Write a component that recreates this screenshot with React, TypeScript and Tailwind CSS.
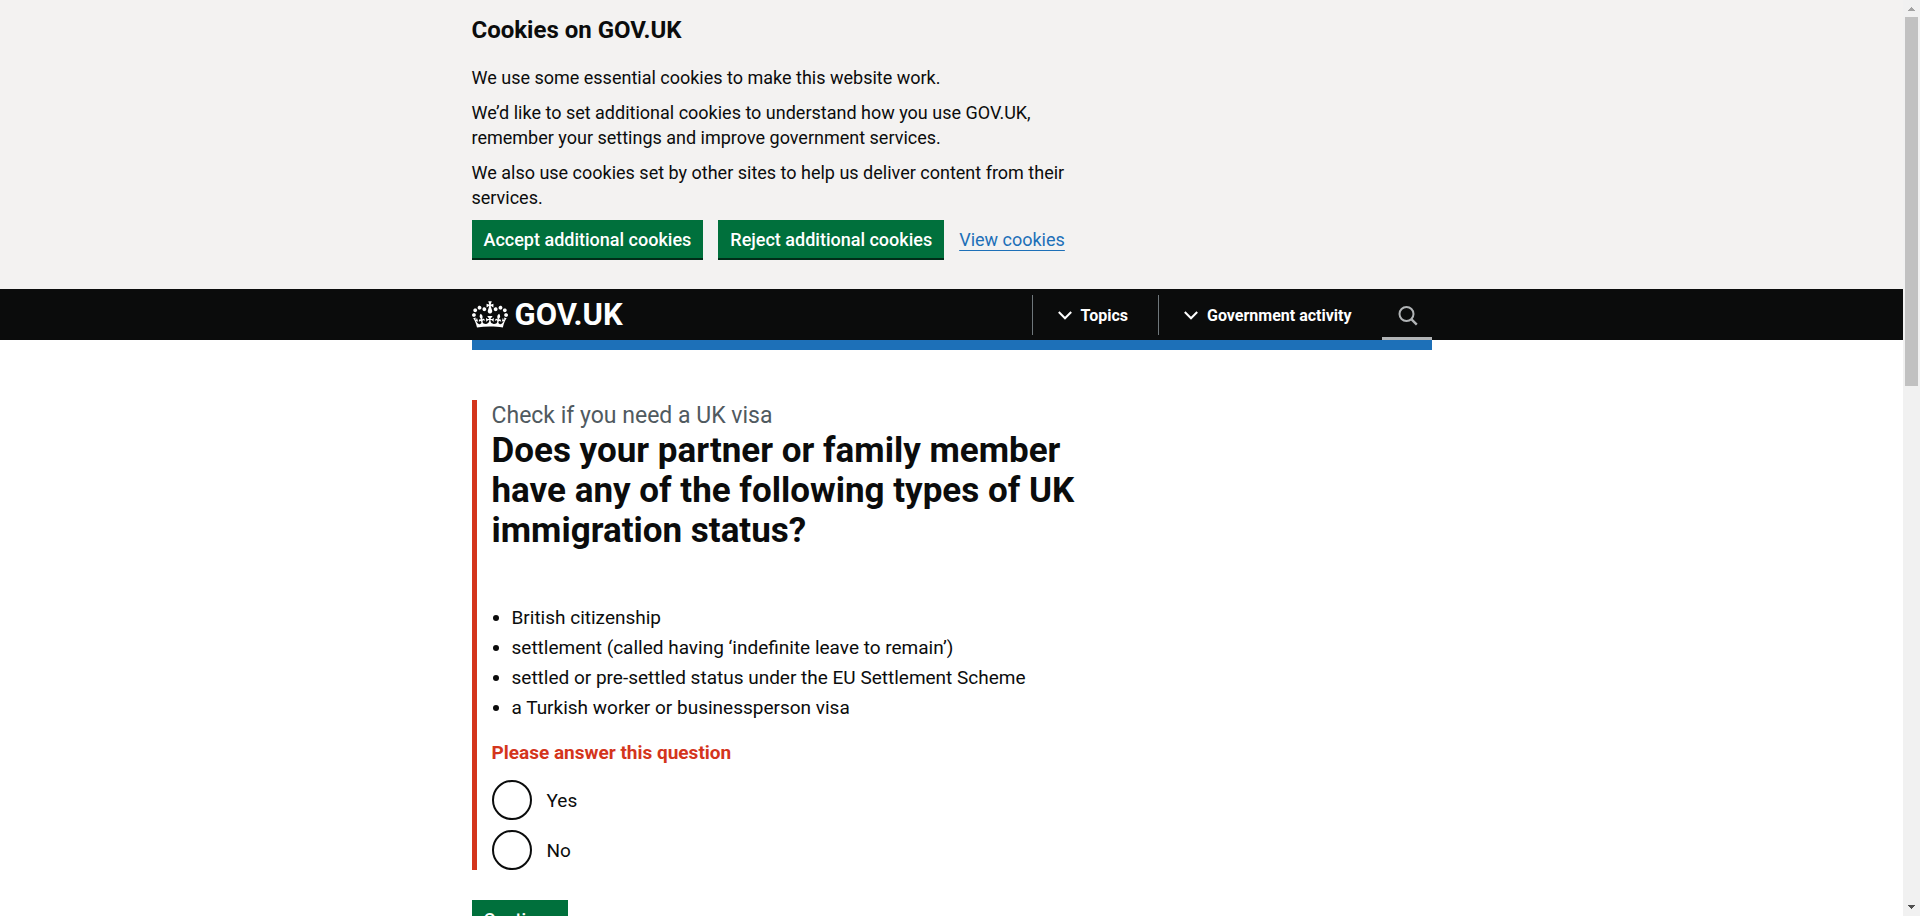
import { useState } from "react";

const statuses = [
  "British citizenship",
  "settlement (called having ‘indefinite leave to remain’)",
  "settled or pre-settled status under the EU Settlement Scheme",
  "a Turkish worker or businessperson visa",
];

function Crown() {
  return (
    <svg aria-hidden="true" viewBox="0 0 132 97" className="h-[27px] w-9 shrink-0 fill-white">
      <path
        fillRule="evenodd"
        d="M25 30.2c3.5 1.5 7.7-.2 9.1-3.7 1.5-3.6-.2-7.8-3.9-9.2-3.6-1.4-7.6.3-9.1 3.9-1.4 3.5.3 7.5 3.9 9zM9 39.5c3.6 1.5 7.8-.2 9.2-3.7 1.5-3.6-.2-7.8-3.9-9.1-3.6-1.5-7.6.2-9.1 3.8-1.4 3.5.3 7.5 3.8 9zM4.4 57.2c3.5 1.5 7.7-.2 9.1-3.8 1.5-3.6-.2-7.7-3.9-9.1-3.5-1.5-7.6.3-9.1 3.8-1.4 3.5.3 7.6 3.9 9.1zm38.3-21.4c3.5 1.5 7.7-.2 9.1-3.8 1.5-3.6-.2-7.7-3.9-9.1-3.6-1.5-7.6.3-9.1 3.8-1.3 3.6.4 7.7 3.9 9.1zm64.4-5.6c-3.6 1.5-7.8-.2-9.1-3.7-1.5-3.6.2-7.8 3.8-9.2 3.6-1.4 7.7.3 9.2 3.9 1.3 3.5-.4 7.5-3.9 9zm15.9 9.3c-3.6 1.5-7.7-.2-9.1-3.7-1.5-3.6.2-7.8 3.7-9.1 3.6-1.5 7.7.2 9.2 3.8 1.5 3.5-.3 7.5-3.8 9zm4.7 17.7c-3.6 1.5-7.8-.2-9.2-3.8-1.5-3.6.2-7.7 3.9-9.1 3.6-1.5 7.7.3 9.2 3.8 1.3 3.5-.4 7.6-3.9 9.1zM89.3 35.8c-3.6 1.5-7.8-.2-9.2-3.8-1.4-3.6.2-7.7 3.9-9.1 3.6-1.5 7.7.3 9.2 3.8 1.4 3.6-.3 7.7-3.9 9.1zM69.7 17.7l8.9 4.7V9.3l-8.9 2.8c-.2-.3-.5-.6-.9-.9L72.4 0H59.6l3.5 11.2c-.3.3-.6.5-.9.9l-8.8-2.8v13.1l8.8-4.7c.3.3.6.7.9.9l-5 15.4v.1c-.2.8-.4 1.6-.4 2.4 0 4.1 3.1 7.5 7 8.1h.2c.3 0 .7.1 1 .1.4 0 .7 0 1-.1h.2c4-.6 7.1-4.1 7.1-8.1 0-.8-.1-1.7-.4-2.4V34l-5.1-15.4c.4-.2.7-.6 1-.9zM66 92.8c16.9 0 32.8 1.1 47.1 3.2 4-16.9 8.9-26.7 14-33.5l-9.6-3.4c1 4.9 1.1 7.2 0 10.2-1.5-1.4-3-4.3-4.2-8.7L108.6 76c2.8-2 5-3.2 7.5-3.3-4.4 9.4-10 11.9-13.6 11.2-4.3-.8-6.3-4.6-5.6-7.9 1-4.7 5.7-5.9 8-.5 4.3-8.7-3-11.4-7.6-8.8 7.1-7.2 7.9-13.5 2.1-21.1-8 6.1-8.1 12.3-4.5 20.8-4.7-5.4-12.1-2.5-9.5 6.2 3.4-5.2 7.9-2 7.2 3.1-.6 4.3-6.4 7.8-13.5 7.2-10.3-.9-10.9-8-11.2-13.8 2.5-.5 7.1 1.8 11 7.3L80.2 60c-4.1 4.4-8 5.3-12.3 5.4 1.4-4.4 8-11.6 8-11.6H55.5s6.4 7.2 7.9 11.6c-4.2-.1-8-1-12.3-5.4l1.4 16.4c3.9-5.5 8.5-7.7 10.9-7.3-.3 5.8-.9 12.8-11.1 13.8-7.2.6-12.9-2.9-13.5-7.2-.7-5 3.8-8.3 7.1-3.1 2.7-8.7-4.6-11.6-9.4-6.2 3.7-8.5 3.6-14.7-4.6-20.8-5.8 7.6-5 13.9 2.2 21.1-4.7-2.6-11.9.1-7.7 8.8 2.3-5.5 7.1-4.2 8.1.5.7 3.3-1.3 7.1-5.7 7.9-3.5.7-9-1.8-13.5-11.2 2.5.1 4.7 1.3 7.5 3.3l-4.7-15.4c-1.2 4.4-2.7 7.2-4.3 8.7-1.1-3-.9-5.3 0-10.2l-9.5 3.4c5 6.9 9.9 16.7 14 33.5 14.8-2.1 30.8-3.2 47.7-3.2z"
      />
    </svg>
  );
}

function NavButton({ label }: { label: string }) {
  return (
    <button type="button" className="flex h-10 items-center gap-[9px] border-l border-[#6f777b] pt-0.5 pl-[25px] pr-[30px] text-base font-bold text-white">
      <svg aria-hidden="true" viewBox="0 0 14 9" className="h-[9px] w-3.5" fill="none" stroke="currentColor" strokeWidth="2">
        <path d="M0.8 1L7 7.3L13.2 1" />
      </svg>
      {label}
    </button>
  );
}

function GreenButton({ label }: { label: string }) {
  return (
    <button type="button" className="h-[38px] bg-[#00703c] px-3 text-[18px] font-medium text-white shadow-[0_2px_0_#002d18]">
      {label}
    </button>
  );
}

function CookieBanner() {
  return (
    <section aria-label="Cookies on GOV.UK" className="bg-[#f3f2f1] pt-[15px] pb-[31px]">
      <div className="mx-auto max-w-[960px]">
        <div className="flex max-w-[610px] flex-col gap-2.5 text-[18px] leading-[25px]">
          <h2 className="mb-2.5 text-2xl leading-[30px] font-bold">Cookies on GOV.UK</h2>
          <p>We use some essential cookies to make this website work.</p>
          <p>
            We’d like to set additional cookies to understand how you use GOV.UK, remember your settings and improve
            government services.
          </p>
          <p>We also use cookies set by other sites to help us deliver content from their services.</p>
          <div className="flex items-center gap-[15px]">
            <GreenButton label="Accept additional cookies" />
            <GreenButton label="Reject additional cookies" />
            <a href="#cookies" className="text-[#1d70b8] underline decoration-1 underline-offset-4">
              View cookies
            </a>
          </div>
        </div>
      </div>
    </section>
  );
}

function Header() {
  return (
    <header>
      <div className="bg-[#0b0c0c]">
        <div className="mx-auto flex h-[51px] max-w-[960px] items-center justify-between">
          <a href="#home" className="flex items-center gap-[7px] text-[31px] leading-none font-bold text-white">
            <Crown />
            GOV.UK
          </a>
          <nav className="flex h-full items-center">
            <NavButton label="Topics" />
            <NavButton label="Government activity" />
            <button type="button" aria-label="Search GOV.UK" className="flex h-full w-[50px] items-center justify-center border-b-[3px] border-[#b1b4b6] pt-1.5 pl-0.5 text-[#b1b4b6]">
              <svg aria-hidden="true" viewBox="0 0 20 20" className="size-5" fill="none" stroke="currentColor" strokeWidth="2">
                <circle cx="8.5" cy="8" r="7" />
                <path d="M13 12.8L18.8 18.6" strokeWidth="2.4" />
              </svg>
            </button>
          </nav>
        </div>
      </div>
      <div className="mx-auto h-2.5 max-w-[960px] bg-[#1d70b8]" />
    </header>
  );
}

function Question() {
  const [answer, setAnswer] = useState("");
  return (
    <main className="mx-auto max-w-[960px] pt-[50px]">
      <form className="max-w-[640px]">
        <fieldset className="border-l-[5px] border-[#d4351c] pl-[15px] text-[19px] leading-[25px]">
          <legend className="contents">
            <span className="block pt-px text-[23px] leading-[30px] text-[#505a5f]">Check if you need a UK visa</span>
            <h1 className="text-[35px] leading-10 font-bold">
              Does your partner or family member have any of the following types of UK immigration status?
            </h1>
          </legend>
          <ul className="mt-[54px] flex list-disc flex-col gap-[5px] pl-5">
            {statuses.map((status) => (
              <li key={status}>{status}</li>
            ))}
          </ul>
          <p className="mt-5 font-bold text-[#d4351c]">Please answer this question</p>
          <div className="mt-[15px] flex flex-col gap-2.5">
            {["Yes", "No"].map((option) => (
              <label key={option} className="flex items-center gap-[15px]">
                <input
                  type="radio"
                  name="answer"
                  value={option}
                  checked={answer === option}
                  onChange={() => setAnswer(option)}
                  className="size-10 appearance-none rounded-full border-2 border-[#0b0c0c] bg-white checked:bg-[radial-gradient(#0b0c0c_10px,white_11px)]"
                />
                {option}
              </label>
            ))}
          </div>
        </fieldset>
        <div className="mt-[30px]">
          <GreenButton label="Continue" />
        </div>
      </form>
    </main>
  );
}

function ScrollTrack() {
  return (
    <div aria-hidden="true" className="flex w-[17px] shrink-0 flex-col items-center justify-between bg-[#f1f1f1]">
      <div className="flex h-full w-full flex-col items-center">
        <svg viewBox="0 0 17 17" className="size-[17px] shrink-0 fill-[#a3a3a3]" shapeRendering="crispEdges">
          <path d="M8 7h1v1h1v1h1v1h1v1H5v-1h1V9h1V8h1z" />
        </svg>
        <div className="h-[41%] w-[13px] bg-[#c1c1c1]" />
      </div>
      <svg viewBox="0 0 17 17" className="size-[17px] shrink-0 fill-[#505050]" shapeRendering="crispEdges">
        <path d="M5 6h7v1h-1v1h-1v1H9v1H8V9H7V8H6V7H5z" />
      </svg>
    </div>
  );
}

export default function App() {
  return (
    <div className="flex h-screen overflow-hidden bg-white font-[Roboto,'Liberation_Sans',sans-serif] text-[#0b0c0c]">
      <div className="min-w-0 flex-1">
        <CookieBanner />
        <Header />
        <Question />
      </div>
      <ScrollTrack />
    </div>
  );
}
